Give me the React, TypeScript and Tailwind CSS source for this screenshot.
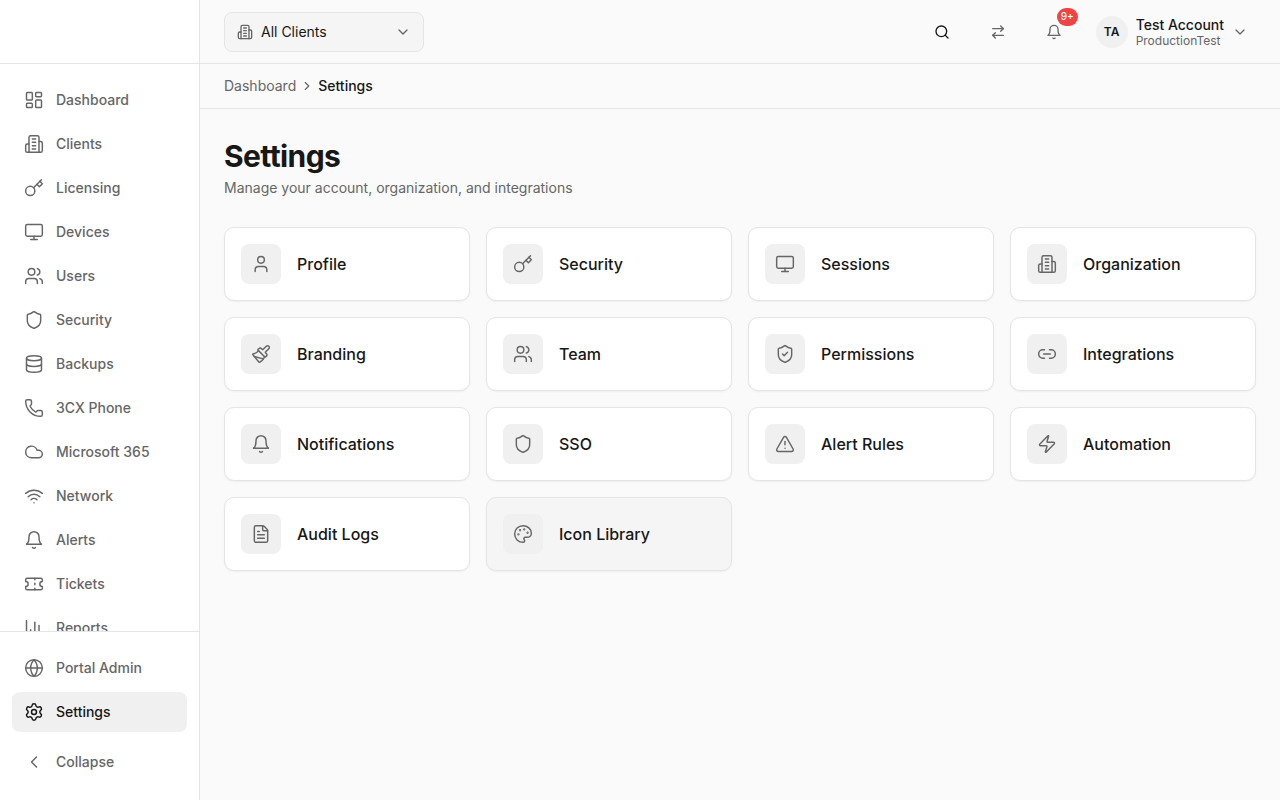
import {
  LayoutDashboard, Monitor, Users, Shield, Database, Phone, Cloud, Wifi, Ticket,
  BarChart3, Globe, Settings, ChevronLeft, ChevronDown, ChevronRight, Search, ArrowRightLeft, User,
  Paintbrush, ShieldCheck, Link2, TriangleAlert, Zap, FileText, Palette,
} from 'lucide-react';

type IconProps = { size?: number; strokeWidth?: number; className?: string };

// older lucide shapes, the packaged ones have been redrawn
function Building({ size = 20, strokeWidth = 1.75, className = '' }: IconProps) {
  return (
    <svg width={size} height={size} viewBox="0 0 24 24" fill="none" stroke="currentColor" strokeWidth={strokeWidth} strokeLinecap="round" strokeLinejoin="round" className={className}>
      <path d="M6 22V4a2 2 0 0 1 2-2h8a2 2 0 0 1 2 2v18Z" />
      <path d="M6 12H4a2 2 0 0 0-2 2v6a2 2 0 0 0 2 2h2" />
      <path d="M18 9h2a2 2 0 0 1 2 2v9a2 2 0 0 1-2 2h-2" />
      <path d="M10 6h4" />
      <path d="M10 10h4" />
      <path d="M10 14h4" />
      <path d="M10 18h4" />
    </svg>
  );
}

function Key({ size = 20, strokeWidth = 1.75, className = '' }: IconProps) {
  return (
    <svg width={size} height={size} viewBox="0 0 24 24" fill="none" stroke="currentColor" strokeWidth={strokeWidth} strokeLinecap="round" strokeLinejoin="round" className={className}>
      <circle cx="7.5" cy="15.5" r="5.5" />
      <path d="m21 2-9.6 9.6" />
      <path d="m15.5 7.5 3 3L22 7l-3-3" />
    </svg>
  );
}

function Bell({ size = 20, strokeWidth = 1.75, className = '' }: IconProps) {
  return (
    <svg width={size} height={size} viewBox="0 0 24 24" fill="none" stroke="currentColor" strokeWidth={strokeWidth} strokeLinecap="round" strokeLinejoin="round" className={className}>
      <path d="M6 8a6 6 0 0 1 12 0c0 7 3 9 3 9H3s3-2 3-9" />
      <path d="M10.3 21a1.94 1.94 0 0 0 3.4 0" />
    </svg>
  );
}

const navItems = [
  { label: 'Dashboard', icon: LayoutDashboard },
  { label: 'Clients', icon: Building },
  { label: 'Licensing', icon: Key },
  { label: 'Devices', icon: Monitor },
  { label: 'Users', icon: Users },
  { label: 'Security', icon: Shield },
  { label: 'Backups', icon: Database },
  { label: '3CX Phone', icon: Phone },
  { label: 'Microsoft 365', icon: Cloud },
  { label: 'Network', icon: Wifi },
  { label: 'Alerts', icon: Bell },
  { label: 'Tickets', icon: Ticket },
  { label: 'Reports', icon: BarChart3 },
];

const cards = [
  { label: 'Profile', icon: User },
  { label: 'Security', icon: Key },
  { label: 'Sessions', icon: Monitor },
  { label: 'Organization', icon: Building },
  { label: 'Branding', icon: Paintbrush },
  { label: 'Team', icon: Users },
  { label: 'Permissions', icon: ShieldCheck },
  { label: 'Integrations', icon: Link2 },
  { label: 'Notifications', icon: Bell },
  { label: 'SSO', icon: Shield },
  { label: 'Alert Rules', icon: TriangleAlert },
  { label: 'Automation', icon: Zap },
  { label: 'Audit Logs', icon: FileText },
  { label: 'Icon Library', icon: Palette, hover: true },
];

export default function App() {
  return (
    <div className="flex h-screen overflow-hidden bg-[#fafafa] font-['Inter',sans-serif] text-[#171717]">
      <aside className="flex w-[200px] shrink-0 flex-col border-r border-[#e5e5e5] bg-white">
        <div className="h-16 shrink-0 border-b border-[#e5e5e5]" />
        <nav className="flex min-h-0 flex-1 flex-col gap-1 overflow-hidden px-3 pt-4">
          {navItems.map((item) => (
            <a key={item.label} className="flex h-10 shrink-0 items-center gap-3 rounded-lg px-3 text-sm font-medium text-[#666666]">
              <item.icon size={20} strokeWidth={1.75} className="shrink-0" />
              {item.label}
            </a>
          ))}
        </nav>
        <div className="flex shrink-0 flex-col gap-1 border-t border-[#e5e5e5] px-3 pt-4 pb-[18px]">
          <a className="flex h-10 items-center gap-3 rounded-lg px-3 text-sm font-medium text-[#666666]">
            <Globe size={20} strokeWidth={1.75} />
            Portal Admin
          </a>
          <a className="flex h-10 items-center gap-3 rounded-lg bg-[#f0f0f0] px-3 text-sm font-medium text-[#171717]">
            <Settings size={20} strokeWidth={1.75} />
            Settings
          </a>
          <button className="mt-[6px] flex h-10 items-center gap-3 rounded-lg px-3 text-sm font-medium text-[#666666]">
            <ChevronLeft size={20} strokeWidth={1.75} />
            Collapse
          </button>
        </div>
      </aside>

      <div className="flex min-w-0 flex-1 flex-col">
        <header className="flex h-16 shrink-0 items-center justify-between border-b border-[#e5e5e5] px-6">
          <button className="flex h-10 w-[200px] items-center justify-between rounded-lg border border-[#e5e5e5] bg-[#f5f5f5] px-3 text-sm text-[#171717]">
            <span className="flex items-center gap-2">
              <Building size={16} strokeWidth={2} className="text-[#666666]" />
              All Clients
            </span>
            <ChevronDown size={16} strokeWidth={2} className="text-[#666666]" />
          </button>
          <div className="flex items-center gap-[14px]">
            <div className="flex items-center gap-4">
              <button className="flex h-10 w-10 items-center justify-center text-[#171717]">
                <Search size={16} strokeWidth={2} />
              </button>
              <button className="flex h-10 w-10 items-center justify-center text-[#666666]">
                <ArrowRightLeft size={16} strokeWidth={2} />
              </button>
              <button className="relative flex h-10 w-10 items-center justify-center text-[#666666]">
                <Bell size={16} strokeWidth={2} />
                <span className="absolute top-[-4px] right-[-4px] flex h-[18px] min-w-[21px] items-center justify-center rounded-full bg-[#ef4444] px-1 text-[10px] font-medium text-white">
                  9+
                </span>
              </button>
            </div>
            <button className="flex items-center gap-2 px-2 text-left">
              <span className="flex h-8 w-8 items-center justify-center rounded-full bg-[#f0f0f0] text-xs font-semibold text-[#171717]">TA</span>
              <span className="flex flex-col">
                <span className="text-sm leading-[17px] font-medium text-[#171717]">Test Account</span>
                <span className="text-xs leading-[15px] text-[#666666]">ProductionTest</span>
              </span>
              <ChevronDown size={16} strokeWidth={2} className="text-[#666666]" />
            </button>
          </div>
        </header>

        <div className="flex h-[45px] shrink-0 items-center gap-1 border-b border-[#e5e5e5] px-6 text-sm">
          <span className="text-[#666666]">Dashboard</span>
          <ChevronRight size={14} strokeWidth={2} className="text-[#666666]" />
          <span className="font-medium text-[#171717]">Settings</span>
        </div>

        <main className="flex-1 px-6 pt-[29px]">
          <h1 className="text-3xl leading-9 font-bold tracking-[-0.02em] text-[#171717]">Settings</h1>
          <p className="mt-1 text-sm leading-5 text-[#666666]">Manage your account, organization, and integrations</p>
          <div className="mt-[29px] grid grid-cols-4 gap-4">
            {cards.map((card) => (
              <a
                key={card.label}
                className={`flex h-[74px] items-center gap-4 rounded-[10px] border border-[#e5e5e5] p-4 shadow-xs ${card.hover ? 'bg-[#f5f5f5]' : 'bg-white'}`}
              >
                <span className="flex h-10 w-10 items-center justify-center rounded-lg bg-[#f0f0f0] text-[#666666]">
                  <card.icon size={20} strokeWidth={1.75} />
                </span>
                <span className="text-base font-medium text-[#171717]">{card.label}</span>
              </a>
            ))}
          </div>
        </main>
      </div>
    </div>
  );
}
